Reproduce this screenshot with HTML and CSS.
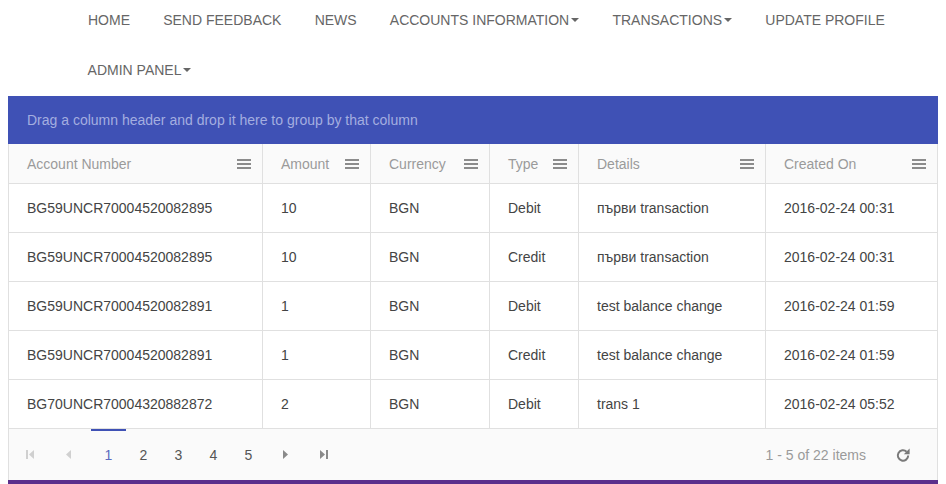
FILE: index.html
```html
<!DOCTYPE html>
<html>
<head>
<meta charset="utf-8">
<link rel="stylesheet" href="styles.css">
</head>
<body>
<nav class="nav">
  <a class="nav-item">HOME</a>
  <a class="nav-item">SEND FEEDBACK</a>
  <a class="nav-item">NEWS</a>
  <a class="nav-item">ACCOUNTS INFORMATION<span class="caret"></span></a>
  <a class="nav-item">TRANSACTIONS<span class="caret"></span></a>
  <a class="nav-item">UPDATE PROFILE</a>
  <a class="nav-item">ADMIN PANEL<span class="caret"></span></a>
</nav>
<div class="grid">
  <div class="group-bar">Drag a column header and drop it here to group by that column</div>
  <div class="row head">
    <div class="cell"><span>Account Number</span><svg class="menu" viewBox="0 0 14 10" width="14" height="10"><rect y="0" width="14" height="2"/><rect y="4" width="14" height="2"/><rect y="8" width="14" height="2"/></svg></div>
    <div class="cell"><span>Amount</span><svg class="menu" viewBox="0 0 14 10" width="14" height="10"><rect y="0" width="14" height="2"/><rect y="4" width="14" height="2"/><rect y="8" width="14" height="2"/></svg></div>
    <div class="cell"><span>Currency</span><svg class="menu" viewBox="0 0 14 10" width="14" height="10"><rect y="0" width="14" height="2"/><rect y="4" width="14" height="2"/><rect y="8" width="14" height="2"/></svg></div>
    <div class="cell"><span>Type</span><svg class="menu" viewBox="0 0 14 10" width="14" height="10"><rect y="0" width="14" height="2"/><rect y="4" width="14" height="2"/><rect y="8" width="14" height="2"/></svg></div>
    <div class="cell"><span>Details</span><svg class="menu" viewBox="0 0 14 10" width="14" height="10"><rect y="0" width="14" height="2"/><rect y="4" width="14" height="2"/><rect y="8" width="14" height="2"/></svg></div>
    <div class="cell"><span>Created On</span><svg class="menu" viewBox="0 0 14 10" width="14" height="10"><rect y="0" width="14" height="2"/><rect y="4" width="14" height="2"/><rect y="8" width="14" height="2"/></svg></div>
  </div>
  <div class="row data">
    <div class="cell">BG59UNCR70004520082895</div><div class="cell">10</div><div class="cell">BGN</div><div class="cell">Debit</div><div class="cell">първи transaction</div><div class="cell">2016-02-24 00:31</div>
  </div>
  <div class="row data">
    <div class="cell">BG59UNCR70004520082895</div><div class="cell">10</div><div class="cell">BGN</div><div class="cell">Credit</div><div class="cell">първи transaction</div><div class="cell">2016-02-24 00:31</div>
  </div>
  <div class="row data">
    <div class="cell">BG59UNCR70004520082891</div><div class="cell">1</div><div class="cell">BGN</div><div class="cell">Debit</div><div class="cell">test balance change</div><div class="cell">2016-02-24 01:59</div>
  </div>
  <div class="row data">
    <div class="cell">BG59UNCR70004520082891</div><div class="cell">1</div><div class="cell">BGN</div><div class="cell">Credit</div><div class="cell">test balance change</div><div class="cell">2016-02-24 01:59</div>
  </div>
  <div class="row data">
    <div class="cell">BG70UNCR70004320882872</div><div class="cell">2</div><div class="cell">BGN</div><div class="cell">Debit</div><div class="cell">trans 1</div><div class="cell">2016-02-24 05:52</div>
  </div>
  <div class="pager">
    <div class="pager-left">
      <span class="pbtn arrow disabled"><svg width="8" height="9" viewBox="0 0 8 9"><rect x="0" y="0" width="2" height="9"/><path d="M8 0V9L3 4.5Z"/></svg></span>
      <span class="pbtn arrow disabled"><svg width="6" height="9" viewBox="0 0 6 9"><path d="M6 0V9L1 4.5Z"/></svg></span>
      <span class="pages">
        <span class="num active">1</span><span class="num">2</span><span class="num">3</span><span class="num">4</span><span class="num">5</span>
      </span>
      <span class="pbtn arrow next"><svg width="6" height="9" viewBox="0 0 6 9"><path d="M0 0V9L5 4.5Z"/></svg></span>
      <span class="pbtn arrow"><svg width="8" height="9" viewBox="0 0 8 9"><path d="M0 0V9L5 4.5Z"/><rect x="6" y="0" width="2" height="9"/></svg></span>
    </div>
    <div class="pager-right">
      <span class="info">1 - 5 of 22 items</span>
      <span class="refresh"><svg width="16" height="16" viewBox="0 0 16 16"><path d="M13.2 8.5a5.2 5.2 0 1 1-1.6-3.8" stroke="#7a7a7a" stroke-width="2" fill="none"/><path d="M14.6 1.4V7.2H8.8Z" fill="#7a7a7a"/></svg></span>
    </div>
  </div>
</div>
<div class="footer-bar"></div>
</body>
</html>
```

FILE: styles.css
```css
* { box-sizing: border-box; }
html, body { height: 100%; }
body {
  margin: 0 8px;
  font-family: "Liberation Sans", Arial, sans-serif;
  font-size: 14px;
  background: #fff;
  overflow: hidden;
}
.nav {
  display: flex;
  flex-wrap: wrap;
  height: 96px;
  padding-left: 63px;
}
.nav-item {
  display: flex;
  align-items: flex-start;
  height: 50px;
  padding: 10px 16.6px 0;
  line-height: 20px;
  color: #666;
  white-space: nowrap;
}
.nav-item:first-child { padding-left: 17px; }
.caret {
  display: inline-block;
  width: 0;
  height: 0;
  margin-left: 2px;
  margin-top: 8px;
  border-top: 4px solid #666;
  border-left: 4px solid transparent;
  border-right: 4px solid transparent;
}
.grid {
  width: 930px;
  border-left: 1px solid #e0e0e0;
  border-right: 1px solid #e0e0e0;
}
.group-bar {
  height: 48px;
  margin: 0 -1px;
  background: #3f51b5;
  color: #a4aee0;
  padding-left: 19px;
  line-height: 48px;
}
.row {
  display: grid;
  grid-template-columns: 253px 108px 119px 89px 187px 172px;
  border-bottom: 1px solid #e0e0e0;
}
.row .cell + .cell { border-left: 1px solid #e0e0e0; }
.head { background: #fafafa; height: 40px; }
.head .cell {
  display: flex;
  align-items: center;
  justify-content: space-between;
  padding: 0 11px 0 18px;
  color: #9a9a9a;
}
.menu { fill: #8c8c8c; display: block; }
.data { height: 49px; background: #fff; }
.data .cell {
  display: flex;
  align-items: center;
  padding-left: 18px;
  color: #444;
  white-space: nowrap;
}
.pager {
  height: 51px;
  background: #fafafa;
  display: flex;
  justify-content: space-between;
  align-items: stretch;
  padding-left: 4px;
}
.pager-left { display: flex; align-items: stretch; }
.pbtn {
  width: 34px;
  margin-right: 4px;
  display: flex;
  align-items: center;
  justify-content: center;
  fill: #8a8a8a;
}
.pbtn.disabled { fill: #d0d0d0; }
.pbtn.next { margin-left: 3px; }
.pages { display: flex; margin-left: 2px; }
.num {
  width: 35px;
  display: flex;
  align-items: center;
  justify-content: center;
  color: #555;
}
.num.active {
  color: #5c6bc0;
  box-shadow: inset 0 2px 0 #3f51b5;
}
.pager-right { display: flex; align-items: center; }
.info { color: #9a9a9a; margin-right: 20px; }
.refresh {
  width: 34px;
  margin-right: 17px;
  display: flex;
  justify-content: center;
}
.footer-bar {
  height: 10px;
  background: #5b2f8c;
  margin: 0 -8px;
}
```
